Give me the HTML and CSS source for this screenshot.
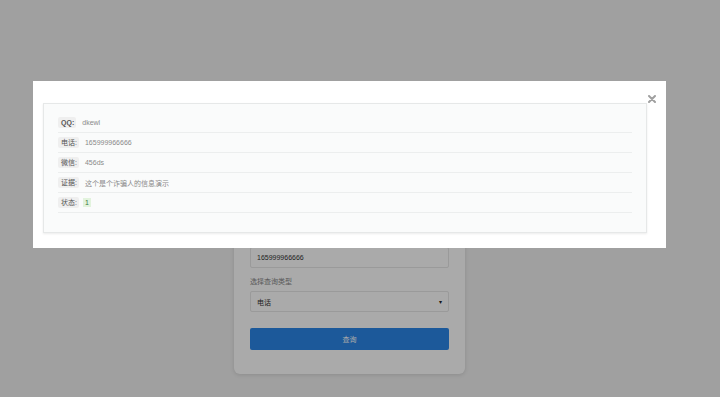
FILE: index.html
```html
<!DOCTYPE html>
<html lang="zh-CN">
<head>
<meta charset="UTF-8">
<meta name="viewport" content="width=device-width, initial-scale=1.0">
<title>查询</title>
<link rel="stylesheet" href="styles.css">
</head>
<body>
<div class="page">
  <div class="card">
    <h3 class="card-title">信息查询</h3>
    <label class="field-label" for="keyword">输入查询内容</label>
    <input class="field" type="text" id="keyword" value="165999966666">
    <label class="field-label" for="type">选择查询类型</label>
    <div class="select">
      <span>电话</span>
      <span class="caret">&#9662;</span>
    </div>
    <button class="btn-query">查询</button>
  </div>
</div>

<div class="mask">
  <div class="modal">
    <span class="close">
      <svg width="8" height="8" viewBox="0 0 8 8"><path d="M1 1 L7 7 M7 1 L1 7" stroke="#a0a0a0" stroke-width="2" stroke-linecap="round"/></svg>
    </span>
    <div class="panel">
      <div class="row"><span class="tag latin">QQ:</span><span class="val">dkewl</span></div>
      <div class="row"><span class="tag">电话:</span><span class="val">165999966666</span></div>
      <div class="row"><span class="tag">微信:</span><span class="val">456ds</span></div>
      <div class="row"><span class="tag">证据:</span><span class="val">这个是个诈骗人的信息演示</span></div>
      <div class="row"><span class="tag">状态:</span><span class="val ok">1</span></div>
    </div>
  </div>
</div>
</body>
</html>
```

FILE: styles.css
```css
body, html {
  margin: 0;
  padding: 0;
  height: 100%;
  font-family: "Liberation Sans", "Noto Sans CJK SC", sans-serif;
  font-size: 7px;
  background-color: #f0f0f0;
  overflow: hidden;
}
.page {
  height: 100%;
  display: flex;
  flex-direction: column;
  justify-content: flex-end;
  padding-bottom: 23px;
  box-sizing: border-box;
}
.card {
  width: 231px;
  margin-left: 234px;
  box-sizing: border-box;
  padding: 16px 16px 24px;
  background-color: #fff;
  border-radius: 6px;
  box-shadow: 0 1px 4px rgba(0,0,0,0.12);
}
.card-title {
  margin: 0 0 10px;
  font-size: 10px;
  color: #333;
}
.field-label {
  display: block;
  height: 10px;
  line-height: 10px;
  color: #888;
  margin-top: 9px;
}
.field, .select {
  display: flex;
  align-items: center;
  justify-content: space-between;
  width: 100%;
  height: 21px;
  box-sizing: border-box;
  margin-top: 4px;
  padding: 0 6px;
  border: 1px solid #e8e8e8;
  border-radius: 2px;
  background: #fff;
  font-family: inherit;
  font-size: 7px;
  color: #333;
}
.caret {
  font-size: 6px;
  color: #222;
}
.btn-query {
  display: block;
  width: 100%;
  height: 22px;
  margin-top: 16px;
  border: none;
  border-radius: 2px;
  background-color: #2a86e8;
  color: #fff;
  font-family: inherit;
  font-size: 7px;
}

/* dialog on top */
.mask {
  position: fixed;
  inset: 0;
  background-color: rgba(0,0,0,0.333);
}
.modal {
  position: relative;
  width: 633px;
  margin: 81px 0 0 33px;
  box-sizing: border-box;
  padding: 22px 19px 15px 10px;
  background-color: #fff;
}
.close {
  position: absolute;
  right: 10px;
  top: 14px;
  line-height: 0;
}
.panel {
  background-color: #fafbfb;
  border: 1px solid #e6e8e8;
  box-shadow: 0 1px 2px rgba(0,0,0,0.08);
  padding: 9px 14px 19px;
}
.row {
  height: 20px;
  box-sizing: border-box;
  display: flex;
  align-items: center;
  border-bottom: 1px solid #eceeee;
}
.tag {
  background-color: #efefef;
  color: #555;
  padding: 1px 2px 1px 3px;
  border-radius: 2px;
  line-height: 9px;
}
.tag.latin {
  font-weight: bold;
}
.val {
  margin-left: 6px;
  color: #8a8a8a;
}
.val.ok {
  background-color: #e2f3dd;
  color: #3c763d;
  padding: 0 2px;
  margin-left: 4px;
  line-height: 9px;
}
```
